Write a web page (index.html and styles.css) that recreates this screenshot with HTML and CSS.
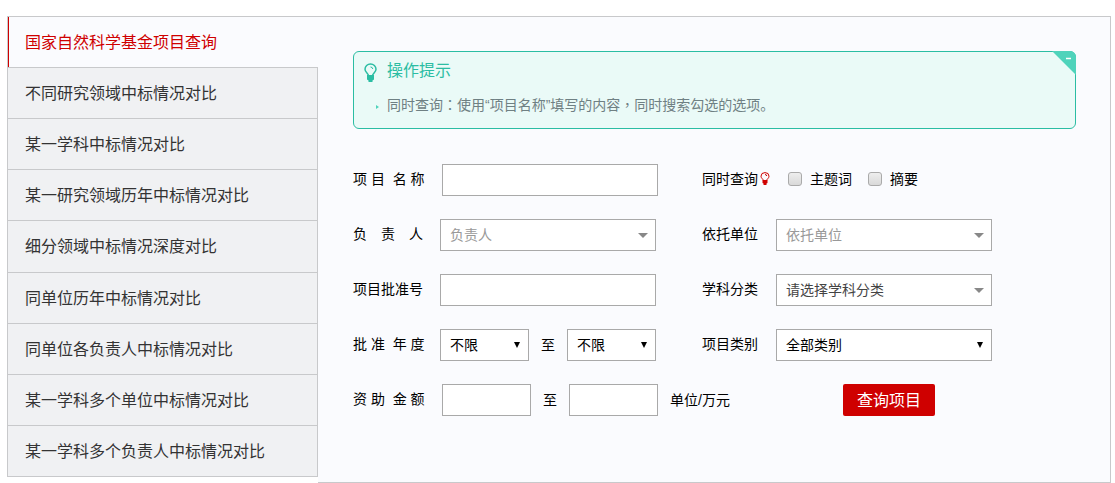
FILE: index.html
```html
<!DOCTYPE html>
<html lang="zh-CN">
<head>
<meta charset="utf-8">
<title>国家自然科学基金项目查询</title>
<link rel="stylesheet" href="styles.css">
</head>
<body>
<div class="frame">
  <nav class="side">
    <a class="side-item active" href="#">国家自然科学基金项目查询</a>
    <a class="side-item" href="#">不同研究领域中标情况对比</a>
    <a class="side-item" href="#">某一学科中标情况对比</a>
    <a class="side-item" href="#">某一研究领域历年中标情况对比</a>
    <a class="side-item" href="#">细分领域中标情况深度对比</a>
    <a class="side-item" href="#">同单位历年中标情况对比</a>
    <a class="side-item" href="#">同单位各负责人中标情况对比</a>
    <a class="side-item" href="#">某一学科多个单位中标情况对比</a>
    <a class="side-item" href="#">某一学科多个负责人中标情况对比</a>
  </nav>
  <main class="panel">
    <section class="tips">
      <svg class="tips-bulb" viewBox="0 0 13 19" aria-hidden="true">
        <path d="M4.500 13C4.500 10.500 1 9.500 1 6.200a5.500 5.200 0 0 1 11 0C12 9.500 8.500 10.500 8.500 13z" fill="none" stroke="currentColor" stroke-width="1.500"/>
        <path d="M6.500 4q2 0 2.300 2" fill="none" stroke="currentColor"/>
        <path d="M3 12h7V16.500L8.500 17.500V19H4.500V17.500L3 16.500z" fill="currentColor"/>
      </svg>
      <h2 class="tips-title">操作提示</h2>
      <p class="tips-text">同时查询<span class="mid" lang="zh-TW">：</span>使用“项目名称”填写的内容<span class="mid" lang="zh-TW">，</span>同时搜索勾选的选项。</p>
      <button class="tips-fold" type="button" aria-label="收起">
        <svg viewBox="0 0 24 24" aria-hidden="true"><path d="M0 0h18a6 6 0 0 1 6 6v18z" fill="#4fd3bb"/><path d="M14 7.500h5" stroke="#fff" stroke-width="1.500"/></svg>
      </button>
    </section>
    <form class="form">
      <label class="name" for="title">项&nbsp;目&nbsp;&nbsp;名&nbsp;称</label>
      <div class="cell inset"><input class="field" id="title" type="text"></div>
      <div class="name with-bulb">同时查询
        <svg class="red-bulb" viewBox="0 0 10 13" aria-hidden="true">
          <path d="M3.500 9C3.500 7 1 6.500 1 4.200a4 3.600 0 0 1 8 0C9 6.500 6.500 7 6.500 9z" fill="none" stroke="currentColor"/>
          <path d="M5 2.500q1.500 0 1.800 1.500" fill="none" stroke="currentColor"/>
          <path d="M2.500 8h5V11l-1 .500V13h-3v-1.500L2.500 11z" fill="currentColor"/>
        </svg>
      </div>
      <div class="cell checks">
        <label class="check"><input type="checkbox">主题词</label>
        <label class="check"><input type="checkbox">摘要</label>
      </div>

      <label class="name" for="leader">负&#12288;责&#12288;人</label>
      <div class="cell"><span class="picker"><select class="field hint" id="leader"><option>负责人</option></select></span></div>
      <label class="name" for="unit">依托单位</label>
      <div class="cell"><span class="picker"><select class="field hint" id="unit"><option>依托单位</option></select></span></div>

      <label class="name" for="code">项目批准号</label>
      <div class="cell"><input class="field" id="code" type="text"></div>
      <label class="name" for="subject">学科分类</label>
      <div class="cell"><span class="picker"><select class="field soft" id="subject"><option>请选择学科分类</option></select></span></div>

      <label class="name" for="from">批&nbsp;准&nbsp;&nbsp;年&nbsp;度</label>
      <div class="cell">
        <span class="picker native short"><select class="field" id="from"><option>不限</option></select></span>
        <label for="to">至</label>
        <span class="picker native short"><select class="field" id="to"><option>不限</option></select></span>
      </div>
      <label class="name" for="kind">项目类别</label>
      <div class="cell"><span class="picker native"><select class="field" id="kind"><option>全部类别</option></select></span></div>

      <label class="name" for="min">资&nbsp;助&nbsp;&nbsp;金&nbsp;额</label>
      <div class="cell inset amount">
        <input class="field short" id="min" type="text">
        <label for="max">至</label>
        <input class="field short" id="max" type="text">
        <span>单位/万元</span>
      </div>
      <div class="cell actions"><button class="submit" type="submit">查询项目</button></div>
    </form>
  </main>
</div>
</body>
</html>
```
FILE: styles.css
```css
* { box-sizing: border-box; }
body {
  margin: 16px 4px 0 7px;
  background: #fff;
  color: #000;
  font: 400 14px/20px "Liberation Sans", "Noto Sans CJK SC", sans-serif;
}
input, select, button { font: inherit; color: inherit; }
.frame { display: flex; align-items: flex-start; }

.side {
  display: flex;
  flex-direction: column;
  flex: 0 0 311px;
  min-height: 461px;
  border-bottom: 1px solid #c8c9cb;
}
.side-item {
  flex: 1;
  display: flex;
  align-items: center;
  min-height: 51px;
  padding: 2px 0 0 17px;
  border: 1px solid #c8c9cb;
  border-bottom: 0;
  background: #f0f1f3;
  color: #333;
  font-size: 16px;
  line-height: 24px;
  text-decoration: none;
}
.side-item.active {
  border-right: 0;
  background: #fafbfe;
  box-shadow: inset 1px 0 #cf0000;
  color: #cf0000;
}

.panel {
  flex: 1;
  min-width: 0;
  padding: 34px 34px 66px 35px;
  border: 1px solid #c8c9cb;
  border-left: 0;
  background: #fafbfe;
}
.tips {
  position: relative;
  display: grid;
  grid-template-columns: 23px 1fr;
  row-gap: 13px;
  padding: 7px 10px 13px;
  border: 1px solid #2bbda3;
  border-radius: 6px;
  background: #eafaf7;
  color: #2bbda3;
}
.tips-bulb { width: 13px; height: 19px; margin-top: 4px; }
.tips-title { margin: 0; font-size: 16px; line-height: 23px; font-weight: 400; }
.tips-text {
  position: relative;
  grid-column: 2;
  margin: 0;
  color: #6f8083;
}
.mid { font-family: "Noto Sans CJK TC", sans-serif; line-height: 1; }
.tips-text::before {
  content: "";
  position: absolute;
  left: -11px;
  top: 10px;
  border: 2px solid transparent;
  border-left: 3px solid #4fd3bb;
  border-right: 0;
}
.tips-fold {
  position: absolute;
  top: -1px;
  right: -1px;
  width: 24px;
  height: 24px;
  padding: 0;
  border: 0;
  background: none;
}
.tips-fold svg { display: block; }

.form {
  display: grid;
  grid-template-columns: 87px 262px 74px 216px;
  row-gap: 23px;
  margin-top: 35px;
}
.name { padding-top: 5px; white-space: nowrap; }
.cell { display: flex; align-items: center; gap: 12px; height: 32px; white-space: nowrap; }
.inset { padding-left: 2px; }
.field {
  width: 216px;
  height: 32px;
  margin: 0;
  padding: 0 9px;
  border: 1px solid #a9a9a9;
  border-radius: 0;
  background: #fff;
  appearance: none;
}
.hint { color: #999; }
.soft { color: #444; }
.picker { position: relative; display: flex; }
.picker::after {
  content: "";
  position: absolute;
  right: 8px;
  top: 14px;
  border: 5px solid transparent;
  border-top-color: #888;
  border-bottom: 0;
  pointer-events: none;
}
.picker.native::after {
  right: 9px;
  top: 13px;
  border-width: 6px 3px 0;
  border-top-color: #000;
}
.short, .short .field { width: 89px; }
.with-bulb { display: flex; gap: 2px; }
.red-bulb { width: 10px; height: 13px; margin-top: 3px; color: #cf0000; }
.checks { height: 30px; gap: 16px; padding-left: 12px; }
.check { display: flex; align-items: center; gap: 8px; }
.check input {
  width: 14px;
  height: 14px;
  margin: 0;
  border: 1px solid #aaa;
  border-radius: 3px;
  background: linear-gradient(#eee, #d9d9d9);
  appearance: none;
}
.check input:checked { background: #888; }
.amount { grid-column: 2 / 4; }
.actions { padding-left: 67px; }
.submit {
  width: 92px;
  height: 32px;
  padding: 2px 0 0;
  border: 0;
  border-radius: 2px;
  background: #cf0000;
  color: #fff;
  font-size: 16px;
}
```
